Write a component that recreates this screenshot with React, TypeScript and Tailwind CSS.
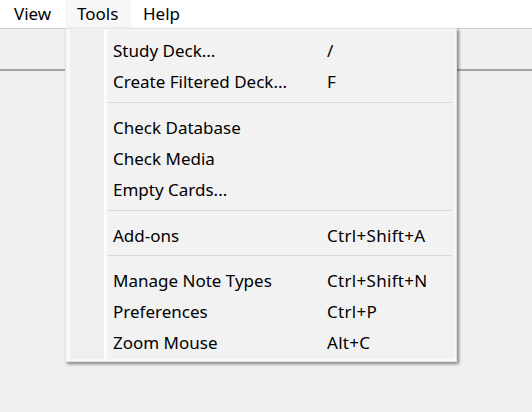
import React from "react";

type Item = { label: string; shortcut?: string } | "sep";

const items: Item[] = [
  { label: "Study Deck...", shortcut: "/" },
  { label: "Create Filtered Deck...", shortcut: "F" },
  "sep",
  { label: "Check Database" },
  { label: "Check Media" },
  { label: "Empty Cards..." },
  "sep",
  { label: "Add-ons", shortcut: "Ctrl+Shift+A" },
  "sep",
  { label: "Manage Note Types", shortcut: "Ctrl+Shift+N" },
  { label: "Preferences", shortcut: "Ctrl+P" },
  { label: "Zoom Mouse", shortcut: "Alt+C" },
];

const App = () => {
  return (
    <div className="relative w-[532px] h-[412px] overflow-hidden bg-[#f0f0f0] text-black font-['Segoe_UI','Noto_Sans',sans-serif] text-[17px]">
      <div className="flex h-[29px] bg-white border-b border-[#cdcdcd] pl-[2px]">
        <div className="flex items-center w-[63px] pl-[12px] pb-[1px]">View</div>
        <div className="flex items-center w-[66px] pl-[12px] pb-[1px] bg-[#f7f7f7]">Tools</div>
        <div className="flex items-center pl-[12px] pb-[1px]">Help</div>
      </div>
      <div className="h-[42px] border-b-2 border-[#a5a5a5]" />

      <div className="absolute left-[65px] top-[28px] w-[392px] bg-[#f9f9f9] border border-[#e2e2e2] pl-[4px] pt-[1px] pr-[1px] pb-[2px] shadow-[2px_2px_3px_rgba(0,0,0,0.45)]">
        <div className="flex">
          <div className="w-[34px] bg-[#efefef]" />
          <div className="w-[3px] bg-[#fcfcfc]" />
          <div className="flex-1 bg-[#f2f2f2] pt-[5px] pr-[3px] pb-[1px]">
            {items.map((it, i) =>
              it === "sep" ? (
                <div key={i} className={i === 8 ? "h-[14px] pt-[4px]" : "h-[15px] pt-[5px]"}>
                  <div className="h-px bg-[#d7d7d7]" />
                </div>
              ) : (
                <div key={i} className="flex items-center h-[31px] pl-[6px]">
                  <span className="w-[214px]">{it.label}</span>
                  <span className="tracking-[0.3px]">{it.shortcut}</span>
                </div>
              )
            )}
          </div>
        </div>
      </div>
    </div>
  );
};

export default App;
